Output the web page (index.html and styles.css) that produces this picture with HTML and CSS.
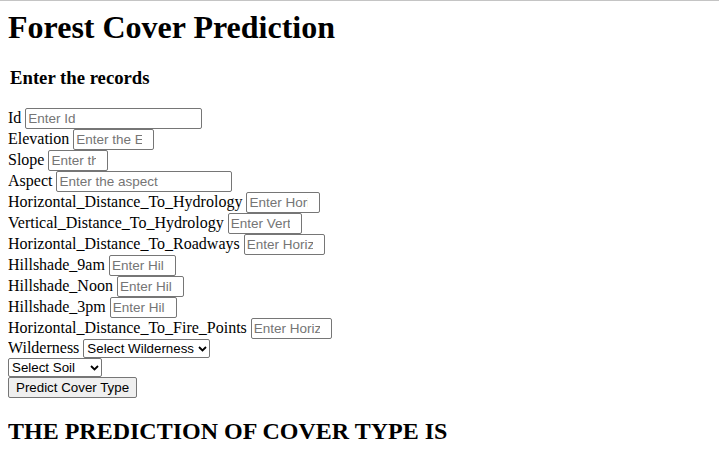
FILE: index.html
```html
<!DOCTYPE html>
<html>
<head>
<meta charset="utf-8">
<title>Forest Cover Prediction</title>
<link rel="stylesheet" href="styles.css">
</head>
<body>
<h1 class="title">Forest Cover Prediction</h1>
<form class="records">
  <h3 class="subtitle">Enter the records</h3>
  <div class="row"><label>Id</label> <input class="field w-id" type="text" placeholder="Enter Id"></div>
  <div class="row"><label>Elevation</label> <input class="field num w-80" type="text" inputmode="numeric" placeholder="Enter the Elevation"></div>
  <div class="row"><label>Slope</label> <input class="field num w-59" type="text" inputmode="numeric" placeholder="Enter the slope"></div>
  <div class="row"><label>Aspect</label> <input class="field w-aspect" type="text" placeholder="Enter the aspect"></div>
  <div class="row"><label>Horizontal_Distance_To_Hydrology</label> <input class="field num w-73" type="text" inputmode="numeric" placeholder="Enter Horizontal"></div>
  <div class="row"><label>Vertical_Distance_To_Hydrology</label> <input class="field num w-73" type="text" inputmode="numeric" placeholder="Enter Vertical"></div>
  <div class="row"><label>Horizontal_Distance_To_Roadways</label> <input class="field num w-80" type="text" inputmode="numeric" placeholder="Enter Horizontal"></div>
  <div class="row"><label>Hillshade_9am</label> <input class="field num w-66" type="text" inputmode="numeric" placeholder="Enter Hillshade"></div>
  <div class="row"><label>Hillshade_Noon</label> <input class="field num w-66" type="text" inputmode="numeric" placeholder="Enter Hillshade"></div>
  <div class="row"><label>Hillshade_3pm</label> <input class="field num w-66" type="text" inputmode="numeric" placeholder="Enter Hillshade"></div>
  <div class="row"><label>Horizontal_Distance_To_Fire_Points</label> <input class="field num w-80" type="text" inputmode="numeric" placeholder="Enter Horizontal"></div>
  <div class="row"><label>Wilderness</label> <span class="picker"><select class="choice w-wild"><option>Select Wilderness</option></select><svg class="chev" width="9" height="6" viewBox="0 0 9 6"><path d="M1 1 L4.5 4.5 L8 1" fill="none" stroke="#000" stroke-width="1.8"/></svg></span></div>
  <div class="row"><span class="picker"><select class="choice w-soil"><option>Select Soil</option></select><svg class="chev" width="9" height="6" viewBox="0 0 9 6"><path d="M1 1 L4.5 4.5 L8 1" fill="none" stroke="#000" stroke-width="1.8"/></svg></span></div>
  <div class="row"><button class="submit" type="button">Predict Cover Type</button></div>
</form>
<h2 class="result">THE PREDICTION OF COVER TYPE IS</h2>
</body>
</html>
```

FILE: styles.css
```css
html {
  border-top: 1px solid #c4c4c4;
  background: #ffffff;
}
body {
  margin: 8px;
  font-family: "Liberation Serif", "Times New Roman", serif;
  font-size: 16px;
  color: #000000;
}
.title {
  margin: 0 0 21.44px 0;
  font-size: 32px;
  font-weight: bold;
}
.subtitle {
  margin: 18.72px 0;
  padding-left: 2px;
  font-size: 18.72px;
  font-weight: bold;
}
.records {
  margin: 0;
}
.field {
  box-sizing: border-box;
  height: 21px;
  padding: 1px 2px;
  border: 1px solid #767676;
  border-radius: 2px;
  font-family: "Liberation Sans", Arial, sans-serif;
  font-size: 13.5px;
  color: #000000;
  background: #ffffff;
}
.field.num {
  padding-right: 11px;
}
.field::placeholder {
  color: #757575;
}
.w-id { width: 177px; }
.w-aspect { width: 176px; }
.w-80 { width: 81px; }
.w-73 { width: 74px; }
.w-66 { width: 67px; }
.w-59 { width: 60px; }
.picker {
  position: relative;
  display: inline-block;
}
.choice {
  box-sizing: border-box;
  -webkit-appearance: none;
  appearance: none;
  height: 19px;
  padding: 0 12px 0 3px;
  font-family: "Liberation Sans", Arial, sans-serif;
  font-size: 13.33px;
  color: #000000;
  border: 1px solid #767676;
  border-radius: 2px;
  background: #ffffff;
}
.chev {
  position: absolute;
  right: 3px;
  top: 7px;
  pointer-events: none;
}
.w-wild { width: 127px; }
.w-soil { width: 94px; }
.submit {
  font-family: "Liberation Sans", Arial, sans-serif;
  font-size: 13.33px;
  color: #000000;
  background: #efefef;
  border: 1px solid #767676;
  border-radius: 2px;
  padding: 2px 7px;
}
.result {
  margin: 19.92px 0;
  font-size: 24px;
  font-weight: bold;
}
```
